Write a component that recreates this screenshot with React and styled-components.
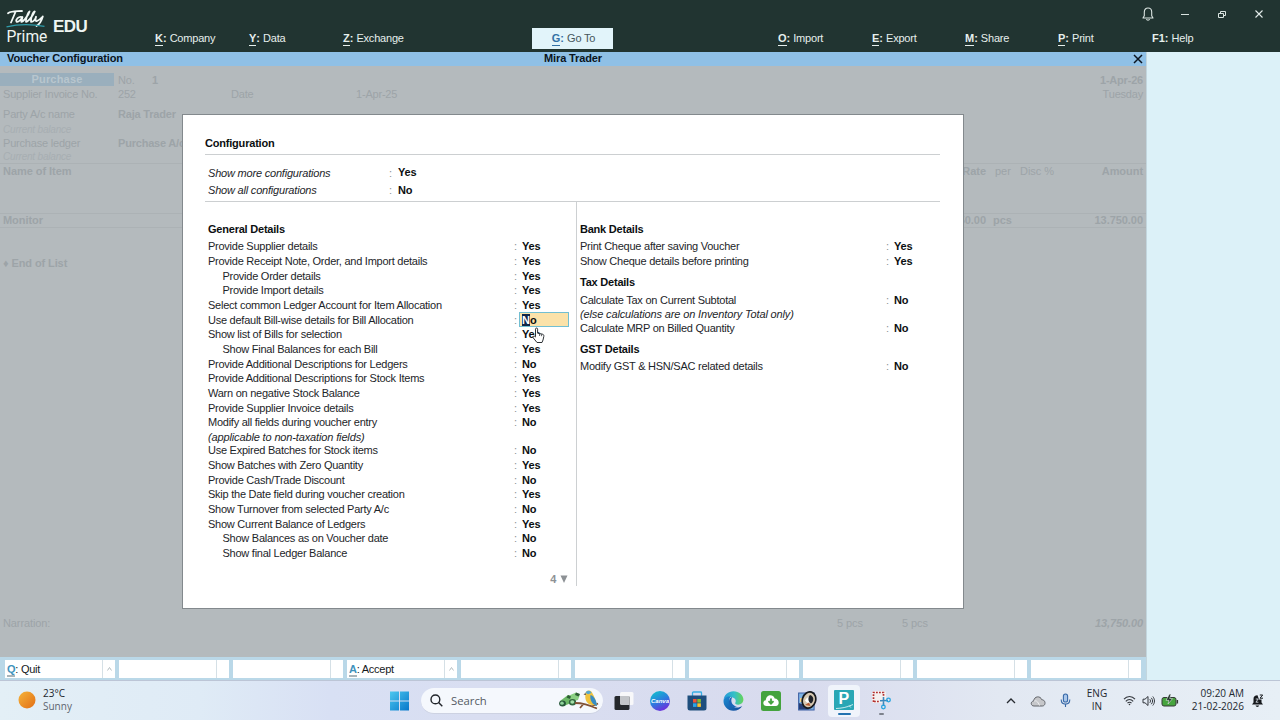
import React from 'react'
import styled, { createGlobalStyle } from 'styled-components'

const GlobalStyle = createGlobalStyle`
    * {
        box-sizing: border-box;
    }

    body {
        margin: 0;
        overflow: hidden;
        background: #dcf1f8;
        font-family: 'Liberation Sans', Arial, sans-serif;
        font-size: 11px;
        color: #1d2529;
    }
`

const Screen = styled.div`
    display: flex;
    flex-direction: column;
    width: 1280px;
    height: 720px;
    overflow: hidden;
`

/* ---------- top bar ---------- */

const Header = styled.header`
    display: grid;
    grid-template-columns: 155px 94px 94px 189px 81px 165px 94px 93px 93px 94px 1fr;
    grid-template-rows: 28px 21px;
    height: 52px;
    background: #213431;
    color: #eef5f3;
`

const Brand = styled.div`
    grid-row: 1 / 3;
    display: flex;
    padding: 8px 0 0 6px;
`

const Edition = styled.span`
    margin: 9px 0 0 3px;
    font-size: 17px;
    line-height: 20px;
    font-weight: bold;
    letter-spacing: -0.5px;
`

const WindowButtons = styled.div`
    grid-column: 2 / -1;
    display: flex;
    justify-content: flex-end;
    align-items: center;
    gap: 24px;
    padding: 0 15px 1px 0;
`

const MenuItem = styled.div`
    display: flex;
    align-items: center;
    height: 21px;
    padding: 0 0 1px ${props => (props.$active ? 2 : 0)}px;
    font-size: 11px;
    letter-spacing: -0.2px;
    white-space: nowrap;
    justify-content: ${props => (props.$active ? 'center' : 'flex-start')};
    background: ${props => (props.$active ? '#e2f4fa' : 'transparent')};
    color: ${props => (props.$active ? '#46565c' : '#e6efed')};
    grid-column-start: ${props => props.$column};
`

const Hotkey = styled.b`
    margin-right: 3px;
    color: ${props => props.$color || 'inherit'};
    letter-spacing: 0;
`

const HotkeyLetter = styled.span`
    display: inline-block;
    line-height: 14px;
    border-bottom: 1px solid ${props => (props.$plain ? 'transparent' : 'currentColor')};
`

/* ---------- voucher behind the dialog ---------- */

const Body = styled.div`
    display: flex;
    height: 628px;
`

const Main = styled.main`
    display: flex;
    flex-direction: column;
    width: 1147px;
    border-right: 1px solid #c3d6de;
`

const TitleBar = styled.div`
    display: grid;
    grid-template-columns: 1fr auto 1fr;
    align-items: center;
    height: 14px;
    padding: 0 2px 0 7px;
    background: #8fc0e6;
    color: #0a1420;
    font-weight: bold;
    letter-spacing: -0.12px;

    span {
        padding: 0 5px 2px 0;
    }

    svg {
        justify-self: end;
    }
`

const Workspace = styled.section`
    position: relative;
    height: 591px;
    background: #b4babd;
    color: #9da4a8;
    overflow: hidden;
    letter-spacing: -0.2px;
`

const VoucherLine = styled.div`
    display: grid;
    grid-template-columns: 115px 34px 79px 125px 1fr;
    align-items: center;
    height: ${props => props.$height}px;
    padding: 0 3px 2px;
    white-space: nowrap;

    > :last-child:nth-child(5) {
        justify-self: end;
    }
`

const VoucherTop = styled.div`
    padding-top: 7px;
`

const VoucherType = styled.b`
    align-self: start;
    margin: 0 4px 0 -3px;
    height: 13px;
    line-height: 12px;
    background: #9aafbd;
    color: #b8c6ce;
    text-align: center;
    letter-spacing: 0.2px;
`

const DatePair = styled.div`
    display: flex;
    justify-content: space-between;
    width: 100%;
`

const Balance = styled.i`
    padding: 0 3px;
    display: block;
    height: ${props => props.$height}px;
    line-height: ${props => props.$height - 1}px;
    font-size: 10px;
    color: #a7aeb2;
`

const ItemLine = styled.div`
    display: grid;
    grid-template-columns: 1fr 60px 34px 40px 83px;
    align-items: center;
    height: ${props => props.$height}px;
    margin-top: ${props => props.$gap || 0}px;
    padding: 0 3px ${props => (props.$closed ? 1 : 0)}px;
    border-top: 1px solid #acb2b5;
    border-bottom: ${props => (props.$closed ? '1px solid #acb2b5' : 'none')};
    letter-spacing: -0.05px;
    white-space: nowrap;
`

const Num = styled.b`
    text-align: right;
    font-style: ${props => (props.$italic ? 'italic' : 'normal')};
`

const Unit = styled.span`
    padding-left: ${props => (props.$bold ? 7 : 9)}px;
    font-weight: ${props => (props.$bold ? 'bold' : 'normal')};
`

const EndOfList = styled.b`
    display: block;
    margin-top: 29px;
    padding-left: 3px;
    line-height: 13px;
    letter-spacing: -0.1px;
`

const NarrationLine = styled.div`
    display: grid;
    grid-template-columns: 834px 65px 1fr auto;
    align-items: center;
    height: 14px;
    margin-top: 346px;
    padding: 0 3px;
    letter-spacing: -0.1px;
`

/* ---------- dialog ---------- */

const Dialog = styled.div`
    position: absolute;
    left: 182px;
    top: 48px;
    width: 782px;
    height: 495px;
    padding: 21px 23px 0 22px;
    border: 1px solid #83898d;
    background: #fff;
    color: #1d2529;
    letter-spacing: -0.25px;
`

const DialogTitle = styled.div`
    height: 19px;
    line-height: 15px;
    color: #0c0f11;
    font-weight: bold;
    letter-spacing: -0.2px;
    border-bottom: 1px solid #cccfd1;
`

const Toggles = styled.div`
    height: 47px;
    padding: 9px 0 0 3px;
    border-bottom: 1px solid #cccfd1;
`

const ToggleRow = styled.div`
    display: grid;
    grid-template-columns: 181px 9px 1fr;
    align-items: center;
    height: 17.5px;
    letter-spacing: -0.2px;

    b {
        padding-bottom: 1px;
        color: #0c0f11;
    }
`

const Panes = styled.div`
    display: grid;
    grid-template-columns: 372px 1fr;
    height: 384px;
`

const Pane = styled.div`
    display: flex;
    flex-direction: column;
    padding: 19px 0 0 3px;
    border-right: ${props => (props.$ruled ? '1px solid #cdd0d2' : 'none')};
`

const Group = styled.section`
    margin-bottom: 6px;
`

const GroupTitle = styled.div`
    height: 18px;
    line-height: 16px;
    color: #0c0f11;
    font-weight: bold;
    letter-spacing: -0.22px;
`

const OptionRow = styled.div`
    display: grid;
    grid-template-columns: 306px 5px 50px;
    align-items: center;
    height: 14.67px;
    white-space: nowrap;
`

const OptionLabel = styled.span`
    padding-left: ${props => (props.$nested ? 14.5 : 0)}px;
`

const Colon = styled.span`
    color: #8b9296;
`

const Value = styled.b`
    padding-left: 3px;
    color: #0c0f11;
    letter-spacing: -0.15px;
`

const Field = styled(Value)`
    display: flex;
    align-items: center;
    height: 15px;
    padding-left: 2px;
    background: #fbe2a9;
    border: 1px solid #72bfd2;
    letter-spacing: 0;
`

const Selected = styled.span`
    height: 12px;
    line-height: 12px;
    background: #10264a;
    color: #fff;
`

const Note = styled.div`
    height: 13.4px;
    line-height: 14px;
    font-style: italic;
    letter-spacing: -0.14px;
`

const More = styled.div`
    display: flex;
    align-items: center;
    justify-content: flex-end;
    gap: 4px;
    margin-top: auto;
    padding: 0 8px 1px 0;
    color: #8d9195;
    font-weight: bold;
`

const Pointer = styled.svg`
    position: absolute;
    left: 532px;
    top: 261px;
`

/* ---------- bottom button bar ---------- */

const ButtonBar = styled.div`
    display: flex;
    gap: 4px;
    height: 23px;
    padding: 3px 5px 2px;
    background: #bad8e8;
`

const BarButton = styled.div`
    display: flex;
    align-items: center;
    justify-content: space-between;
    width: 110px;
    height: 18px;
    padding-left: 2px;
    background: #fff;
    color: #15191b;
    letter-spacing: -0.25px;
`

const BarLabel = styled.span`
    padding-top: 1px;
`

const Caret = styled.span`
    display: flex;
    align-items: center;
    justify-content: center;
    width: 13px;
    height: 18px;
    border-left: 1px solid #d5e0e6;
`

const BarKey = styled.span`
    display: inline-block;
    line-height: 12px;
    color: #3f93bd;
    font-weight: bold;
    border-bottom: 2px solid #a9b5ba;
`

/* ---------- windows taskbar ---------- */

const Taskbar = styled.footer`
    display: grid;
    grid-template-columns: 389px 1fr auto;
    height: 40px;
    border-top: 1px solid #bcc5d6;
    background: linear-gradient(90deg, #e3eff6 0, #dfebf6 200px, #d8e0f4 330px, #d9def1 480px, #d8dbee 800px, #e2e8f2 1000px, #e7eff6 1280px);
    font-family: 'Open Sans', 'Noto Sans', sans-serif;
    font-size: 10px;
    color: #23282f;
`

const Weather = styled.div`
    display: flex;
    align-items: center;
    gap: 7px;
    padding: 0 0 1px 18px;
    line-height: 13.5px;
`

const Muted = styled.div`
    color: #5e656f;
`

const Apps = styled.div`
    display: flex;
    align-items: center;
`

const SearchBox = styled.div`
    display: flex;
    align-items: center;
    width: 182px;
    height: 26px;
    margin: 0 4.5px 0 11px;
    padding: 0 3px 0 9px;
    border-radius: 13px;
    background: #f5f8fd;
    border-bottom: 1px solid #cdd2e2;
    font-size: 11.3px;
    color: #545a63;

    span {
        flex: 1;
        padding-left: 8px;
    }
`

const AppSlot = styled.div`
    display: flex;
    flex-direction: column;
    align-items: center;
    justify-content: center;
    width: 32px;
    height: 32px;
    margin-right: 4.8px;
    border-radius: 4px;
    background: ${props => (props.$active ? '#f0f4fb' : 'transparent')};
    padding-top: ${props => (props.$running ? 4 : 0)}px;
`

const RunningMark = styled.div`
    width: ${props => (props.$active ? 13 : 5)}px;
    height: 2px;
    margin-top: 3px;
    border-radius: 1px;
    background: ${props => (props.$active ? '#2272b0' : '#7d828c')};
`

const Tray = styled.div`
    display: flex;
    align-items: center;
    padding-right: 16px;
    line-height: 13px;
`

const TrayGroup = styled.div`
    display: flex;
    align-items: center;
    gap: ${props => props.$gap}px;
`

const Language = styled.div`
    width: 24px;
    margin: 0 14px 0 14px;
    padding-bottom: 1px;
    text-align: center;
`

const Clock = styled.div`
    width: 56px;
    margin: 0 7px 0 9px;
    padding-bottom: 2px;
    text-align: right;
    white-space: nowrap;
`

const menu = [
    ['K', 'Company', 2],
    ['Y', 'Data', 3],
    ['Z', 'Exchange', 4],
    ['G', 'Go To', 5],
    ['O', 'Import', 7],
    ['E', 'Export', 8],
    ['M', 'Share', 9],
    ['P', 'Print', 10],
    ['F1', 'Help', 11],
]

const general = [
    ['Provide Supplier details', 'Yes'],
    ['Provide Receipt Note, Order, and Import details', 'Yes'],
    ['Provide Order details', 'Yes', true],
    ['Provide Import details', 'Yes', true],
    ['Select common Ledger Account for Item Allocation', 'Yes'],
    ['Use default Bill-wise details for Bill Allocation', 'edit'],
    ['Show list of Bills for selection', 'Yes'],
    ['Show Final Balances for each Bill', 'Yes', true],
    ['Provide Additional Descriptions for Ledgers', 'No'],
    ['Provide Additional Descriptions for Stock Items', 'Yes'],
    ['Warn on negative Stock Balance', 'Yes'],
    ['Provide Supplier Invoice details', 'Yes'],
    ['Modify all fields during voucher entry', 'No'],
    ['(applicable to non-taxation fields)'],
    ['Use Expired Batches for Stock items', 'No'],
    ['Show Batches with Zero Quantity', 'Yes'],
    ['Provide Cash/Trade Discount', 'No'],
    ['Skip the Date field during voucher creation', 'Yes'],
    ['Show Turnover from selected Party A/c', 'No'],
    ['Show Current Balance of Ledgers', 'Yes'],
    ['Show Balances as on Voucher date', 'No', true],
    ['Show final Ledger Balance', 'No', true],
]

const bank = [
    ['Print Cheque after saving Voucher', 'Yes'],
    ['Show Cheque details before printing', 'Yes'],
]

const tax = [
    ['Calculate Tax on Current Subtotal', 'No'],
    ['(else calculations are on Inventory Total only)'],
    ['Calculate MRP on Billed Quantity', 'No'],
]

const gst = [['Modify GST & HSN/SAC related details', 'No']]

const barButtons = [['Q', 'Quit'], null, null, ['A', 'Accept'], null, null, null, null, null, null]

const TallyLogo = () => (
    <svg width="44" height="40" viewBox="0 0 44 40" fill="none">
        <g stroke="#f4faf8" strokeWidth="1.8" strokeLinecap="round" strokeLinejoin="round">
            <path d="M2 5.2C6 2.7 11 3.5 16 3M9.5 4L5 14.5" />
            <path d="M16 9C12.5 8 9.5 11.5 10.5 13.5C12 15 16 10.5 16.5 9L15.3 13.8C17.5 14 23 6 23.5 3.5C22 4 19.5 11.5 20 13.8C22.5 14 27.8 6 28.8 3.5C26.5 4 24.5 11.5 25 13.8C27.5 14 29.5 10.5 30.1 8.8C29 12 29.5 13.5 31 13C33.5 12 36 9.3 36.8 8.5C35.8 12 33 16.5 30.5 18" />
        </g>
        <path d="M0.5 18.8C12 16 26 16 38.5 18.3" stroke="#2f9caa" strokeWidth="1.3" />
        <text x="0.5" y="34" fontFamily="Roboto, sans-serif" fontSize="15.6" fill="#eef5f3">Prime</text>
    </svg>
)

const WindowIcons = () => (
    <WindowButtons>
        <svg width="14" height="16" viewBox="0 0 14 16" fill="none" stroke="#d9e3e0" strokeWidth="1.1">
            <path d="M2 12H12L10.7 9.8V6C10.7 3.3 9 2 7 2S3.3 3.3 3.3 6V9.8Z" strokeLinejoin="round" />
            <path d="M5.3 13.3C6 14.4 8 14.4 8.7 13.3" />
        </svg>
        <svg width="12" height="12" viewBox="0 0 12 12" stroke="#d9e3e0">
            <path d="M2 6.5H10" />
        </svg>
        <svg width="14" height="12" viewBox="0 0 14 12" fill="none" stroke="#d9e3e0">
            <path d="M3.5 5.5H8.5V9.5H3.5ZM5.5 5.5V3.5H10.5V7.5H8.5" strokeLinejoin="round" />
        </svg>
        <svg width="12" height="12" viewBox="0 0 12 12" stroke="#e4ecea" strokeWidth="1.1">
            <path d="M2.5 2.5L9.5 9.5M9.5 2.5L2.5 9.5" />
        </svg>
    </WindowButtons>
)

const Options = ({ rows }) =>
    rows.map(([label, value, nested]) =>
        value ? (
            <OptionRow key={label}>
                <OptionLabel $nested={nested}>{label}</OptionLabel>
                <Colon>:</Colon>
                {value === 'edit' ? (
                    <Field>
                        <Selected>N</Selected>
                        <span>o</span>
                    </Field>
                ) : (
                    <Value>{value}</Value>
                )}
            </OptionRow>
        ) : (
            <Note key={label}>{label}</Note>
        )
    )

const Voucher = () => (
    <>
        <VoucherTop />
        <VoucherLine $height={13}>
            <VoucherType>Purchase</VoucherType>
            <span>No.</span>
            <b>1</b>
            <span />
            <b>1-Apr-26</b>
        </VoucherLine>
        <VoucherLine $height={18}>
            <span>Supplier Invoice No.</span>
            <span>252</span>
            <span />
            <span>Date</span>
            <DatePair>
                <span>1-Apr-25</span>
                <span>Tuesday</span>
            </DatePair>
        </VoucherLine>
        <VoucherLine $height={21}>
            <span>Party A/c name</span>
            <b>Raja Trader</b>
        </VoucherLine>
        <Balance $height={11}>Current balance</Balance>
        <VoucherLine $height={15}>
            <span>Purchase ledger</span>
            <b>Purchase A/c</b>
        </VoucherLine>
        <Balance $height={12}>Current balance</Balance>
        <ItemLine $height={15}>
            <b>Name of Item</b>
            <Num>Rate</Num>
            <Unit>per</Unit>
            <span>Disc %</span>
            <Num>Amount</Num>
        </ItemLine>
        <ItemLine $height={15} $gap={35} $closed>
            <b>Monitor</b>
            <Num>2,750.00</Num>
            <Unit $bold>pcs</Unit>
            <span />
            <Num>13.750.00</Num>
        </ItemLine>
        <EndOfList>♦ End of List</EndOfList>
        <NarrationLine>
            <span>Narration:</span>
            <span>5 pcs</span>
            <span>5 pcs</span>
            <Num $italic>13,750.00</Num>
        </NarrationLine>
    </>
)

const ConfigDialog = () => (
    <Dialog>
        <DialogTitle>Configuration</DialogTitle>
        <Toggles>
            <ToggleRow>
                <i>Show more configurations</i>
                <Colon>:</Colon>
                <b>Yes</b>
            </ToggleRow>
            <ToggleRow>
                <i>Show all configurations</i>
                <Colon>:</Colon>
                <b>No</b>
            </ToggleRow>
        </Toggles>
        <Panes>
            <Pane $ruled>
                <GroupTitle>General Details</GroupTitle>
                <Options rows={general} />
                <More>
                    4
                    <svg width="8" height="8" viewBox="0 0 8 8">
                        <path d="M0.5 0.5H7.5L4 8Z" fill="#8d9195" />
                    </svg>
                </More>
            </Pane>
            <Pane>
                <Group>
                    <GroupTitle>Bank Details</GroupTitle>
                    <Options rows={bank} />
                </Group>
                <Group>
                    <GroupTitle>Tax Details</GroupTitle>
                    <Options rows={tax} />
                </Group>
                <Group>
                    <GroupTitle>GST Details</GroupTitle>
                    <Options rows={gst} />
                </Group>
            </Pane>
        </Panes>
    </Dialog>
)

const AppIcons = () => (
    <>
        <AppSlot>
            <svg width="20" height="20" viewBox="0 0 20 20">
                <rect x="6" y="1" width="13.5" height="13" rx="1.5" fill="#f8f8fa" />
                <rect x="0.5" y="5" width="15" height="14" rx="1.5" fill="#25282c" />
                <path d="M6 5H15.5V14H7.5Q6 14 6 12.5Z" fill="#c3c5c9" />
            </svg>
        </AppSlot>
        <AppSlot>
            <svg width="20" height="20" viewBox="0 0 20 20">
                <defs>
                    <linearGradient id="canva" x1="0.2" y1="0" x2="0.7" y2="1">
                        <stop offset="0" stopColor="#12bfcd" />
                        <stop offset="0.5" stopColor="#2b7ede" />
                        <stop offset="1" stopColor="#7428dc" />
                    </linearGradient>
                </defs>
                <circle cx="10" cy="10" r="10" fill="url(#canva)" />
                <text x="10" y="12.2" textAnchor="middle" fontFamily="Liberation Sans, sans-serif" fontSize="6" fontStyle="italic" fontWeight="bold" fill="#fff">Canva</text>
            </svg>
        </AppSlot>
        <AppSlot>
            <svg width="20" height="20" viewBox="0 0 20 20">
                <path d="M5.5 5V1.8Q5.5 1 6.5 1H13.5Q14.5 1 14.5 1.8V5" fill="none" stroke="#36aee5" strokeWidth="1.3" />
                <path d="M0.5 4.5H19.5V17Q19.5 19.5 17 19.5H3Q0.5 19.5 0.5 17Z" fill="#1e4e7d" />
                <path d="M6 8H9.6V11.6H6Z" fill="#ef5438" />
                <path d="M10.3 8H13.9V11.6H10.3Z" fill="#84bd31" />
                <path d="M6 12.3H9.6V15.9H6Z" fill="#2aa5e7" />
                <path d="M10.3 12.3H13.9V15.9H10.3Z" fill="#fbc22c" />
            </svg>
        </AppSlot>
        <AppSlot>
            <svg width="21" height="20" viewBox="0 0 21 20">
                <defs>
                    <linearGradient id="edgeTop" x1="0" y1="0.3" x2="1" y2="0.3">
                        <stop offset="0" stopColor="#2497d9" />
                        <stop offset="0.55" stopColor="#35c0c6" />
                        <stop offset="1" stopColor="#66d556" />
                    </linearGradient>
                    <linearGradient id="edgeLow" x1="0" y1="0" x2="1" y2="1">
                        <stop offset="0" stopColor="#1b8bd3" />
                        <stop offset="1" stopColor="#154a99" />
                    </linearGradient>
                </defs>
                <path d="M0.6 9C1 3.8 5.2 0.2 10.5 0.2C16 0.2 20.4 4 20.4 8.6C20.4 11.7 18 13.8 15.2 13.8C12.8 13.8 11.6 12.8 12.4 11.6C13.6 9.4 12 6.6 8.5 6.2C5 5.8 1.5 7 0.6 9Z" fill="url(#edgeTop)" />
                <path d="M0.5 10C0.7 7 4 5 7.6 5.7C6.5 7 6 8.4 6.3 10.2C6.8 14 10 16.7 14 16.5C16.2 16.4 18 15.7 19.2 14.9C17.5 18 14 19.9 10.3 19.8C4.6 19.6 0.5 15.3 0.5 10Z" fill="url(#edgeLow)" />
                <path d="M8.4 8.5C7.8 12 10.5 15 14 15.8C9.5 17.5 5.5 14.5 6 10C6.2 8 7.5 6.3 9 6C9 7 8.6 7.5 8.4 8.5Z" fill="#1a65b7" />
            </svg>
        </AppSlot>
        <AppSlot>
            <svg width="20" height="20" viewBox="0 0 20 20">
                <rect width="20" height="20" rx="2.5" fill="#44a33e" />
                <path d="M5.5 15C1.5 15 1.3 9.5 4.8 9.2C5 3.5 12 2.2 13.7 7.5C18.5 7.5 19.2 15 14.8 15Z" fill="#fff" />
                <path d="M10 7.5V12.3M7.5 10.2L10 12.8L12.5 10.2" fill="none" stroke="#44a33e" strokeWidth="1.8" />
            </svg>
        </AppSlot>
        <AppSlot>
            <svg width="20" height="20" viewBox="0 0 20 20">
                <rect x="1.6" y="2" width="15.5" height="17" fill="#7fb2e3" stroke="#3c5fa3" />
                <path d="M2 12L7 14L12 18.5H2Z" fill="#263d76" />
                <path d="M3 7H7V11H3Z" fill="#eed08f" />
                <ellipse cx="12" cy="9" rx="6.6" ry="8.3" transform="rotate(18 12 9)" fill="#d8c9b2" stroke="#17191d" strokeWidth="1.7" />
                <path d="M8 9.5C10 5 14.5 4.5 16.5 8C15 12.5 10.5 13.5 8 9.5Z" fill="#fff" />
                <path d="M13 4C17 5 17.5 10 14 12.5C11 11 10.5 6.5 13 4Z" fill="#20232a" />
                <path d="M8 14L12 11.5L13.5 15Z" fill="#b65b32" />
            </svg>
        </AppSlot>
        <AppSlot $active $running>
            <svg width="20" height="20" viewBox="0 0 20 20">
                <rect width="20" height="20" rx="1" fill="#29a7b5" />
                <text x="9.8" y="14" textAnchor="middle" fontFamily="Liberation Sans, sans-serif" fontWeight="bold" fontSize="16" fill="#fff">P</text>
                <path d="M2 18.5C7 18.3 13 17.5 19 14.5M15 15.5L16.8 17.5" fill="none" stroke="#d4f2f4" strokeWidth="0.9" />
            </svg>
            <RunningMark $active />
        </AppSlot>
        <AppSlot $running>
            <svg width="20" height="20" viewBox="0 0 20 20" fill="none">
                <rect x="1" y="1" width="14" height="12" rx="2" fill="#f5f1f0" />
                <path d="M2.5 12V2.5H12.5V7" stroke="#b3302f" strokeWidth="1.7" strokeDasharray="1.8 1.2" />
                <path d="M3 11.5H9" stroke="#b3302f" strokeWidth="1.5" strokeDasharray="1.8 1.2" />
                <path d="M9 10.7L17 10.5M12.5 7V16" stroke="#3c88bd" strokeWidth="1.6" />
                <circle cx="17.5" cy="10" r="1.8" stroke="#27a5df" strokeWidth="1.3" />
                <circle cx="12.4" cy="17" r="1.8" stroke="#27a5df" strokeWidth="1.3" />
            </svg>
            <RunningMark />
        </AppSlot>
    </>
)

const SearchArt = () => (
    <svg width="42" height="22" viewBox="0 0 42 22">
        <path d="M2 12L10 6L14 7L13 14L6 17Z" fill="#6cb867" />
        <path d="M10 7L18 3.5L22 5.5L20 11L13 13Z" fill="#8bd183" />
        <path d="M10 6L13 7.5L12 10L8.5 8.5ZM18 3.5L22 5L20.5 7.5L17 6Z" fill="#2e5e35" />
        <ellipse cx="4.5" cy="14.5" rx="3.4" ry="3" fill="#27583a" />
        <ellipse cx="14.5" cy="13.3" rx="3.6" ry="3.3" fill="#31663f" />
        <ellipse cx="4" cy="14.2" rx="1.8" ry="1.6" fill="#8fd39b" />
        <ellipse cx="14.3" cy="13" rx="2" ry="1.8" fill="#a4dfa9" />
        <path d="M17 14Q27 14 39 19.5M25 15.5L22 19M34 17.5L40 14.5" stroke="#815236" strokeWidth="1.8" fill="none" />
        <path d="M27.5 5C27 1.5 32 0 34 3.5C36 7 38 11 39 16.5L34 16C28.5 15.5 26.5 10 27.5 5Z" fill="#f0c23c" />
        <path d="M32.5 6C36 7 38.5 11.5 39 17C34.5 16 31.5 11 32.5 6Z" fill="#378cc5" />
        <path d="M27.5 3.8C29 1.2 32.5 1.2 33.5 4L30 5.2Z" fill="#56a6cf" />
        <path d="M27.5 4L25.5 5.5L28 6Z" fill="#564538" />
    </svg>
)

const TrayIcons = () => (
    <>
        <svg width="10" height="8" viewBox="0 0 10 8" fill="none" stroke="#272b31" strokeWidth="1.3">
            <path d="M1 6L5 2L9 6" />
        </svg>
        <svg width="16" height="12" viewBox="0 0 16 12">
            <path d="M4 11C0.5 11 0.3 6.3 3.7 6C4 1 10.5 0.5 11.7 4.7C16 4.7 16 11 12.3 11Z" fill="#c6c7ca" stroke="#62656b" />
            <path d="M4 6.2C6 5 8 6.5 9.5 10.5" fill="none" stroke="#eff0f2" />
        </svg>
        <svg width="11" height="15" viewBox="0 0 11 15" fill="none" stroke="#3769a8" strokeWidth="1.1">
            <rect x="3.4" y="1" width="4.2" height="8" rx="2.1" fill="#aac7eb" />
            <path d="M1.2 6.5C1.2 12.7 9.8 12.7 9.8 6.5M5.5 11.2V14" />
        </svg>
    </>
)

const WindowsTaskbar = () => (
    <Taskbar>
        <Weather>
            <svg width="18" height="18" viewBox="0 0 18 18">
                <defs>
                    <linearGradient id="sun" x1="0" y1="0" x2="1" y2="1">
                        <stop offset="0" stopColor="#f5b43b" />
                        <stop offset="1" stopColor="#e26d14" />
                    </linearGradient>
                </defs>
                <circle cx="9" cy="9" r="8.5" fill="url(#sun)" />
            </svg>
            <div>
                <div>23°C</div>
                <Muted>Sunny</Muted>
            </div>
        </Weather>
        <Apps>
            <svg width="21" height="20" viewBox="0 0 21 20">
                <defs>
                    <linearGradient id="start" x1="0" y1="0" x2="1" y2="1">
                        <stop offset="0" stopColor="#4cc8ef" />
                        <stop offset="1" stopColor="#0877ca" />
                    </linearGradient>
                </defs>
                <path d="M1 0.5H10V9.5H1ZM11 0.5H20V9.5H11ZM1 10.5H10V19.5H1ZM11 10.5H20V19.5H11Z" fill="url(#start)" />
            </svg>
            <SearchBox>
                <svg width="13" height="13" viewBox="0 0 13 13" fill="none" stroke="#20242a" strokeWidth="1.4">
                    <circle cx="5.4" cy="5.4" r="4.4" />
                    <path d="M8.6 8.6L12.3 12.3" />
                </svg>
                <span>Search</span>
                <SearchArt />
            </SearchBox>
            <AppIcons />
        </Apps>
        <Tray>
            <TrayGroup $gap={14}>
                <TrayIcons />
            </TrayGroup>
            <Language>
                ENG
                <br />
                IN
            </Language>
            <TrayGroup $gap={6}>
                <svg width="13" height="11" viewBox="0 0 13 11" fill="none" stroke="#33373d" strokeWidth="1.1">
                    <path d="M1 4.2C4 0.6 9 0.6 12 4.2M2.8 6.3C4.8 3.9 8.2 3.9 10.2 6.3M4.5 8.2C5.6 6.9 7.4 6.9 8.5 8.2" />
                    <circle cx="6.5" cy="9.5" r="0.8" fill="#33373d" stroke="none" />
                </svg>
                <svg width="13" height="12" viewBox="0 0 13 12" fill="none" stroke="#33373d">
                    <path d="M1 4.2H3L6 1.5V10.5L3 7.8H1ZM7.8 4.2C8.7 5.3 8.7 6.7 7.8 7.8M9.3 2.8C11 4.8 11 7.2 9.3 9.2M10.8 1.5C13 4.3 13 7.7 10.8 10.5" />
                </svg>
                <svg width="18" height="14" viewBox="0 0 18 14">
                    <rect x="1" y="3.5" width="14" height="8.5" rx="2" fill="#46a43e" stroke="#353b37" />
                    <path d="M16.4 6V9.5" stroke="#353b37" strokeWidth="1.4" />
                    <path d="M8.5 0L5 6.3H8L7 10L11.5 4.6H8.7L10 0Z" fill="#22302a" stroke="#e7efee" strokeWidth="0.6" />
                </svg>
            </TrayGroup>
            <Clock>
                09:20 AM
                <br />
                21-02-2026
            </Clock>
            <svg width="13" height="14" viewBox="0 0 13 14">
                <path d="M1 10.5L2.5 8.5V5C2.5 2.5 4 1.3 6.5 1.3L8 5.5H10.5V8.5L12 10.5Z" fill="#16191d" />
                <path d="M4.5 11.5H8.2C7.7 13.4 5 13.4 4.5 11.5Z" fill="#16191d" />
                <path d="M8.8 1H11.7L9 4.2H12" fill="none" stroke="#16191d" strokeWidth="1" />
                <path d="M4.7 5H7.2L4.9 8.2H7.4" fill="none" stroke="#e8eff6" strokeWidth="0.8" />
            </svg>
        </Tray>
    </Taskbar>
)

const App = () => (
    <Screen>
        <GlobalStyle />
        <Header>
            <Brand>
                <TallyLogo />
                <Edition>EDU</Edition>
            </Brand>
            <WindowIcons />
            {menu.map(([key, label, column]) => (
                <MenuItem key={key} $column={column} $active={key === 'G'}>
                    <Hotkey $color={key === 'G' && '#3371a5'}>
                        <HotkeyLetter $plain={key === 'F1'}>{key}</HotkeyLetter>:
                    </Hotkey>
                    {label}
                </MenuItem>
            ))}
        </Header>
        <Body>
            <Main>
                <TitleBar>
                    <span>Voucher Configuration</span>
                    <span>Mira Trader</span>
                    <svg width="11" height="10" viewBox="0 0 11 10" stroke="#0a1420" strokeWidth="1.5">
                        <path d="M1 1L9 9M9 1L1 9" />
                    </svg>
                </TitleBar>
                <Workspace>
                    <Voucher />
                    <ConfigDialog />
                    <Pointer width="13" height="17" viewBox="0 0 13 17">
                        <path d="M3.5 9.5V2.2C3.5 0.6 5.6 0.6 5.6 2.2V6.2L10.5 7.2C11.8 7.5 12 8.3 11.8 9.5L11 13L10 15.5H5L1.2 10.8C0.5 9.6 1.7 8.6 2.7 9.3L3.5 10Z" fill="#fff" stroke="#2d3135" strokeLinejoin="round" />
                        <path d="M7.6 6.8V9M9.6 7.3V9.2" stroke="#2d3135" strokeWidth="0.8" />
                    </Pointer>
                </Workspace>
                <ButtonBar>
                    {barButtons.map((button, i) => (
                        <BarButton key={i}>
                            <BarLabel>
                                {button && (
                                    <>
                                        <BarKey>{button[0]}</BarKey>: {button[1]}
                                    </>
                                )}
                            </BarLabel>
                            <Caret>
                                {button && (
                                    <svg width="5" height="4" viewBox="0 0 5 4" fill="none" stroke="#b5bdc1">
                                        <path d="M0.5 3.5L2.5 0.5L4.5 3.5" />
                                    </svg>
                                )}
                            </Caret>
                        </BarButton>
                    ))}
                </ButtonBar>
            </Main>
        </Body>
        <WindowsTaskbar />
    </Screen>
)

export default App
